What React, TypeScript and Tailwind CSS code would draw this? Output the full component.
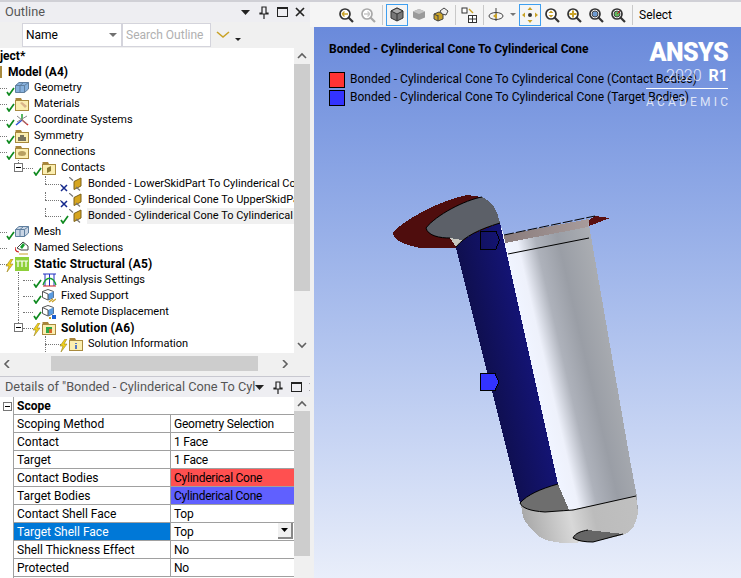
import type { ReactNode } from 'react';

type Status = 'check' | 'cross' | 'bolt';

const iconLeft: Record<number, string> = { 1: 'pl-[15px]', 2: 'pl-[42px]', 3: 'pl-[69px]' };
const dotLeft: Record<number, string> = { 1: 'left-0 w-[7px]', 2: 'left-[23px] w-[10px]', 3: 'left-[45px] w-[16px]' };

function Mark({ status }: { status: Status }) {
  if (status === 'check') {
    return (
      <svg width="9" height="9" viewBox="0 0 9 9" className="absolute left-[-9px] top-[6px]">
        <path d="M1 5 L3 8 L8 1" fill="none" stroke="#0f8a1f" strokeWidth="1.7" />
      </svg>
    );
  }
  if (status === 'cross') {
    return (
      <svg width="8" height="8" viewBox="0 0 8 8" className="absolute left-[-9px] top-[7px]">
        <path d="M1 1 L7 7 M7 1 L1 7" fill="none" stroke="#14288c" strokeWidth="1.5" />
      </svg>
    );
  }
  return (
    <svg width="9" height="13" viewBox="0 0 9 13" className="absolute left-[-10px] top-[2px]">
      <path d="M6 0 L1 7 L4 7 L2 13 L8 5 L5 5 L8 0 Z" fill="#f2d21c" stroke="#9a8420" strokeWidth="0.6" />
    </svg>
  );
}

function Folder({ children }: { children?: ReactNode }) {
  return (
    <svg width="14" height="14" viewBox="0 0 14 14">
      <path d="M0.5 3 V1 H6 L7 3 H13.5 V4 H0.5 Z" fill="#a8853a" />
      <rect x="0.5" y="3.5" width="13" height="10" fill="#fbeeb0" stroke="#a88a3e" />
      {children}
    </svg>
  );
}

function Cube({ fill = '#5a9be0', extra }: { fill?: string; extra?: ReactNode }) {
  return (
    <svg width="14" height="14" viewBox="0 0 14 14">
      <path d="M6 0.5 L11.5 2.5 V8.5 L6 11 L0.5 8.5 V2.5 Z" fill="#fff" stroke="#555" />
      <path d="M6 5 L11.5 2.5 V8.5 L6 11 Z" fill={fill} />
      <path d="M0.5 2.5 L6 5 V11" fill="none" stroke="#555" />
      {extra}
    </svg>
  );
}

function Geo({ light }: { light?: boolean }) {
  return (
    <svg width="14" height="14" viewBox="0 0 14 14">
      <path d="M0.5 4.5 L4 1.5 H13.5 V8 L9.5 11.5 H0.5 Z" fill={light ? '#c9d5e4' : '#86b0dc'} stroke="#5f7f9f" />
      <path d="M0.5 4.5 H9.5 V11.5 M9.5 4.5 L13.5 1.5 M5 4.5 V11.5 M5 4.5 L8.5 1.5" fill="none" stroke="#5f7f9f" />
    </svg>
  );
}

function Contact() {
  return (
    <svg width="14" height="14" viewBox="0 0 14 14">
      <path d="M5 4.5 L12 1 V9 L5 12.5 Z" fill="#d6a51f" stroke="#7c611a" />
      <path d="M0 0 L4 3.5 M7 10 L11 13.5" stroke="#777" strokeWidth="1.2" />
    </svg>
  );
}

function TreeRow({
  depth,
  status,
  icon,
  bold,
  minus,
  selected,
  vLine,
  children,
}: {
  depth: 1 | 2 | 3;
  status?: Status;
  icon: ReactNode;
  bold?: boolean;
  minus?: boolean;
  selected?: boolean;
  vLine?: string;
  children: ReactNode;
}) {
  return (
    <div className={`relative flex h-4 items-center whitespace-nowrap ${iconLeft[depth]}`}>
      <span className={`absolute top-[8px] border-t border-dotted border-[#777] ${dotLeft[depth]}`} />
      {vLine && <span className={`absolute border-l border-dotted border-[#777] ${vLine}`} />}
      {minus && <MinusBox className="absolute left-[14px] top-[3px]" />}
      <span className="relative mr-[5px] h-[14px] w-[14px] shrink-0">
        {icon}
        {status && <Mark status={status} />}
      </span>
      <span className={`${bold ? 'text-[12px] font-bold tracking-[0.2px]' : 'text-[11px]'} ${selected ? 'bg-[#f0f0f0] pr-[40px] -ml-[1px] pl-[1px]' : ''}`}>{children}</span>
    </div>
  );
}

function MinusBox({ className }: { className?: string }) {
  return (
    <span className={`flex h-[9px] w-[9px] items-center justify-center border border-[#777] bg-white ${className ?? ''}`}>
      <span className="h-px w-[5px] bg-black" />
    </span>
  );
}

function Chevron({ dir }: { dir: 'up' | 'down' | 'left' | 'right' }) {
  const d = {
    up: 'M1 6 L5 2 L9 6',
    down: 'M1 2 L5 6 L9 2',
    left: 'M6 0 L2 4 L6 8',
    right: 'M3 0 L7 4 L3 8',
  }[dir];
  return (
    <svg width="10" height="8" viewBox="0 0 10 8">
      <path d={d} fill="none" stroke="#606060" strokeWidth="1.6" />
    </svg>
  );
}

function TitleBar({ title, fill }: { title: string; fill?: boolean }) {
  return (
    <div className="flex h-5 shrink-0 items-center bg-[#eeeef2] pl-[5px] pr-[5px] text-[12.75px] text-[#555]">
      <span className="whitespace-nowrap">{title}</span>
      {fill && <span className="mx-[5px] h-[7px] flex-1 bg-[radial-gradient(#a8a8a8_35%,transparent_40%)] bg-[length:2px_2px]" />}
      <svg width="9" height="5" viewBox="0 0 9 5" className="ml-auto shrink-0">
        <path d="M0 0 H9 L4.5 5 Z" fill="#222" />
      </svg>
      <svg width="10" height="13" viewBox="0 0 10 13" className="ml-[9px] shrink-0">
        <path d="M3 1 H7 V7 H9 V8 H1 V7 H3 Z M5 8 V13" fill="none" stroke="#222" strokeWidth="1.2" />
      </svg>
      <span className="ml-[8px] h-[10px] w-[11px] shrink-0 border border-t-2 border-[#222]" />
      <svg width="10" height="10" viewBox="0 0 10 10" className="ml-[7px] shrink-0">
        <path d="M1 1 L9 9 M9 1 L1 9" stroke="#222" strokeWidth="1.7" />
      </svg>
    </div>
  );
}

function Grip() {
  return <span className="h-[18px] w-[5px] shrink-0 bg-[radial-gradient(#aaa_40%,transparent_45%)] bg-[length:2px_2px]" />;
}

function Mag({ dot, dim }: { dot: ReactNode; dim?: boolean }) {
  const c = dim ? '#a8a8a8' : '#333';
  return (
    <svg width="16" height="16" viewBox="0 0 16 16">
      <circle cx="7" cy="7" r="5" fill="#fff" stroke={c} strokeWidth="1.7" />
      <path d="M10.5 10.5 L15 15" stroke={c} strokeWidth="2.2" />
      {dot}
    </svg>
  );
}

function ToolBtn({ active, children, className }: { active?: boolean; children: ReactNode; className?: string }) {
  return (
    <span className={`flex h-[22px] w-[22px] shrink-0 items-center justify-center ${active ? 'border border-[#3f9ff0]' : ''} ${className ?? ''}`}>
      {children}
    </span>
  );
}

function Sep() {
  return <span className="mx-[3px] h-[20px] w-px shrink-0 bg-[#c9c9c9]" />;
}

const props: { label: string; value: string; cell?: string; rowSel?: boolean; drop?: boolean }[] = [
  { label: 'Scoping Method', value: 'Geometry Selection' },
  { label: 'Contact', value: '1 Face' },
  { label: 'Target', value: '1 Face' },
  { label: 'Contact Bodies', value: 'Cylinderical Cone', cell: 'bg-[#ff5050]' },
  { label: 'Target Bodies', value: 'Cylinderical Cone', cell: 'bg-[#6060ff]' },
  { label: 'Contact Shell Face', value: 'Top' },
  { label: 'Target Shell Face', value: 'Top', rowSel: true, drop: true },
  { label: 'Shell Thickness Effect', value: 'No' },
  { label: 'Protected', value: 'No' },
];

function Model() {
  return (
    <svg className="absolute inset-0" width="427" height="551" viewBox="314 27 427 551" shapeRendering="crispEdges">
      <defs>
        <linearGradient id="body" gradientUnits="userSpaceOnUse" x1="530" y1="350" x2="612" y2="331">
          <stop offset="0" stopColor="#f0f4ff" />
          <stop offset="0.14" stopColor="#eef1fb" />
          <stop offset="0.36" stopColor="#aeb2bb" />
          <stop offset="0.62" stopColor="#9a9ea6" />
          <stop offset="1" stopColor="#aaadb2" />
        </linearGradient>
        <linearGradient id="tube" gradientUnits="userSpaceOnUse" x1="470" y1="350" x2="535" y2="335">
          <stop offset="0" stopColor="#0e0e48" />
          <stop offset="1" stopColor="#15157c" />
        </linearGradient>
        <linearGradient id="dome" gradientUnits="userSpaceOnUse" x1="525" y1="530" x2="640" y2="505">
          <stop offset="0" stopColor="#a8a8a8" />
          <stop offset="0.4" stopColor="#d8d8d8" />
          <stop offset="0.6" stopColor="#bcbcbc" />
          <stop offset="1" stopColor="#c0c0c0" />
        </linearGradient>
        <linearGradient id="band" gradientUnits="userSpaceOnUse" x1="504" y1="0" x2="590" y2="0">
          <stop offset="0" stopColor="#8a7c7c" />
          <stop offset="1" stopColor="#a89c9c" />
        </linearGradient>
      </defs>
      {/* flange */}
      <path d="M393 233 C400 222 440 200 467 195 L482 197 L500 223 L456 248 C440 248 425 249 420 248 C405 245 393 240 393 233 Z" fill="#4f0d0d" />
      <path d="M589 220 L595 216 L610 218 L589 226 Z" fill="#5a0f0f" />
      {/* body */}
      <path d="M500 223 L504 235 L589 219 L589 225 L630 460 L637 497 L638 513 C636 525 632 532 623 535 L593 542 L563 543 C552 542 545 540 540 537 C532 530 525 523 523 517 L521 505 L558 484 Z" fill="url(#body)" />
      <path d="M504 235 L589 219 L588 227 L505 243 Z" fill="url(#band)" />
      <path d="M521 505 L570 510 L636 496 L638 513 C636 525 632 532 623 535 L593 542 L563 543 C552 542 545 540 540 537 C532 530 525 523 523 517 Z" fill="url(#dome)" />
      {/* tube */}
      <path d="M456 248 C462 240 470 235 480 231 L500 223 L558 484 C540 489 527 495 520 503 Z" fill="url(#tube)" />
      <path d="M558 484 C540 489 527 495 520 503 C522 508 530 511 545 512 L569 510 Z" fill="#6e6e6e" />
      {/* opening */}
      <path d="M426 228 C436 215 465 200 482 197 C492 200 498 212 500 223 C480 229 465 236 456 247 L450 238 C440 238 428 236 426 228 Z" fill="#5c6068" />
      <path d="M450 238 L456 247 L462 240 Z" fill="#c8c8c0" />
      <path d="M573 538 C575 533 582 531 588 530 L623 534 L593 542 C585 542 575 541 573 538 Z" fill="#666" />
      <g fill="none" stroke="#000" strokeWidth="1" shapeRendering="auto">
        <path d="M482 197 C465 200 436 215 426 228 C428 236 440 238 450 238" />
        <path d="M456 247 C465 236 480 229 500 223" />
        <path d="M504 235 L595 216" strokeDasharray="10 2" />
        <path d="M508 254 L589 238" />
        <path d="M520 503 C527 495 540 489 558 484" />
        <path d="M520 503 C522 508 530 511 545 512 L573 510 L636 496" />
        <path d="M573 538 C575 533 582 531 588 530 M573 538 C578 541 585 542 593 542 L623 534" />
      </g>
      {/* markers */}
      <path d="M480.5 231.5 H496 L499.5 240 L496 249 H480.5 Z" fill="none" stroke="#000" strokeWidth="1" />
      <path d="M480.5 373.5 H495 L499 382 L495 390.5 H480.5 Z" fill="#3333ff" stroke="#000" strokeWidth="1" />
    </svg>
  );
}

export default function App() {
  return (
    <div className="flex h-[578px] w-[741px] overflow-hidden bg-[#f0f0f0] text-[12px] text-black font-['Roboto','Noto_Sans',sans-serif]">
      {/* Left column */}
      <div className="flex w-[310px] shrink-0 flex-col overflow-hidden border-t-2 border-[#d0d0d6]">
        <TitleBar title="Outline" fill />

        <div className="flex h-[26px] shrink-0 items-center bg-[#f0f0f0] pl-[10px]">
          <Grip />
          <span className="ml-[7px] flex h-[24px] w-[100px] items-center justify-between border border-[#d4d4dc] bg-white pl-[3px] pr-[4px]">
            Name
            <svg width="8" height="4" viewBox="0 0 8 4"><path d="M0 0 H8 L4 4 Z" fill="#707070" /></svg>
          </span>
          <span className="flex h-[24px] w-[89px] items-center border border-[#d4d4dc] bg-white pl-[3px] text-[#b0b0b0]">Search Outline</span>
          <svg width="14" height="8" viewBox="0 0 14 8" className="ml-[5px]">
            <path d="M1 1 L7 6 L13 1" fill="none" stroke="#c9a227" strokeWidth="1.6" />
          </svg>
          <svg width="6" height="3" viewBox="0 0 6 3" className="ml-[5px] mt-[8px]"><path d="M0 0 H6 L3 3 Z" fill="#222" /></svg>
        </div>

        <div className="flex h-[305px] shrink-0">
          <div className="w-[294px] shrink-0 overflow-hidden bg-white">
            <div className="flex h-4 items-center font-bold">ject*</div>
            <div className="flex h-4 items-center font-bold">
              <span className="mr-[6px] h-[12px] w-[2px] bg-[#a88a3e]" />
              Model (A4)
            </div>
            <TreeRow depth={1} status="check" icon={<Geo />}>Geometry</TreeRow>
            <TreeRow depth={1} status="check" icon={<Folder><path d="M5 6 L10 11 L12 9 L7 5 Z" fill="#d9b48a" /></Folder>}>Materials</TreeRow>
            <TreeRow depth={1} status="check" icon={
              <svg width="14" height="14" viewBox="0 0 14 14">
                <path d="M7 7 V1" stroke="#1fa02f" strokeWidth="1.5" />
                <path d="M7 7 L1 12" stroke="#2a50d8" strokeWidth="1.5" />
                <path d="M7 7 L13 12" stroke="#d82a2a" strokeWidth="1.5" />
                <path d="M2 3 L12 11 M2 9 L12 3" stroke="#888" />
              </svg>
            }>Coordinate Systems</TreeRow>
            <TreeRow depth={1} status="check" icon={<Folder><path d="M4 12 V8 M6 12 V6 M8 12 V6 M10 12 V8" stroke="#333" strokeWidth="1.3" /></Folder>}>Symmetry</TreeRow>
            <TreeRow depth={1} status="check" icon={<Folder><ellipse cx="7" cy="8.5" rx="4" ry="2.5" fill="#b8a060" /></Folder>}>Connections</TreeRow>
            <TreeRow depth={2} status="check" minus vLine="left-[18px] top-0 h-[3px]" icon={<Folder><path d="M5 7 L9 5 V10 L5 12 Z" fill="#8a7a30" /></Folder>}>Contacts</TreeRow>
            <TreeRow depth={3} status="cross" vLine="left-[45px] top-0 h-[8px]" icon={<Contact />}>Bonded - LowerSkidPart To Cylinderical Cone</TreeRow>
            <TreeRow depth={3} status="cross" vLine="left-[45px] top-0 h-[8px]" icon={<Contact />}>Bonded - Cylinderical Cone To UpperSkidPart</TreeRow>
            <TreeRow depth={3} status="check" selected vLine="left-[45px] top-0 h-[8px]" icon={<Contact />}>Bonded - Cylinderical Cone To Cylinderical Cone</TreeRow>
            <TreeRow depth={1} status="check" icon={<Geo light />}>Mesh</TreeRow>
            <TreeRow depth={1} icon={
              <svg width="14" height="14" viewBox="0 0 14 14">
                <path d="M2 7 L8 1 L13 5 V9 H6 Z" fill="#fff" stroke="#444" />
                <path d="M5 6 L8 2 L10 4 L7 8 Z" fill="#18a030" />
                <path d="M0 6 C0 10 2 11 4 11" fill="none" stroke="#d02020" strokeWidth="1.2" />
                <path d="M4 13 H13" stroke="#c9a227" />
              </svg>
            }>Named Selections</TreeRow>
            <TreeRow depth={1} bold status="bolt" icon={
              <span className="flex h-[14px] w-[14px] items-center justify-center bg-[#8ed03a]">
                <svg width="12" height="8" viewBox="0 0 12 8"><path d="M0 1 H12 M2 1 V7 M6 1 V7 M10 1 V7" stroke="#fff" strokeWidth="1.2" /></svg>
              </span>
            }>Static Structural (A5)</TreeRow>
            <TreeRow depth={2} status="check" vLine="left-[18px] top-0 h-4" icon={
              <svg width="15" height="14" viewBox="0 0 15 14">
                <path d="M1 1 H14 M3 1 V13 M7.5 1 V13 M12 1 V13" stroke="#2030c0" />
                <path d="M1 13 H14" stroke="#d02020" />
                <path d="M1 12 C4 3 11 3 14 12" fill="none" stroke="#18a030" strokeWidth="1.3" />
              </svg>
            }>Analysis Settings</TreeRow>
            <TreeRow depth={2} status="check" vLine="left-[18px] top-0 h-4" icon={<Cube extra={<path d="M7 13 L11 10 M10 13 L14 10" stroke="#c9a227" strokeWidth="1.3" />} />}>Fixed Support</TreeRow>
            <TreeRow depth={2} status="check" vLine="left-[18px] top-0 h-4" icon={<Cube extra={<><rect x="10" y="10" width="4" height="4" fill="#1a5fd0" /><rect x="7" y="12" width="2" height="2" fill="#c9a227" /></>} />}>Remote Displacement</TreeRow>
            <TreeRow depth={2} bold status="bolt" minus vLine="left-[18px] top-0 h-[3px]" icon={<Folder><rect x="4" y="6" width="6" height="6" fill="#2fa848" /><rect x="7" y="8" width="3" height="4" fill="#d8682a" /></Folder>}>Solution (A6)</TreeRow>
            <TreeRow depth={3} status="bolt" vLine="left-[45px] top-0 h-4" icon={<Folder><path d="M7 6 V7 M7 8 V12" stroke="#2050c8" strokeWidth="1.5" /></Folder>}>Solution Information</TreeRow>
          </div>
          <div className="flex w-4 shrink-0 flex-col bg-[#f0f0f0]">
            <div className="flex h-4 shrink-0 items-center justify-center"><Chevron dir="up" /></div>
            <div className="h-[227px] shrink-0 bg-[#cdcdcd]" />
            <div className="flex-1" />
            <div className="flex h-4 shrink-0 items-center justify-center"><Chevron dir="down" /></div>
          </div>
        </div>

        <div className="flex h-[21px] shrink-0 items-center bg-[#f0f0f0]">
          <div className="flex w-[51px] shrink-0 justify-center pr-[36px]"><Chevron dir="left" /></div>
          <div className="h-[15px] w-[207px] shrink-0 bg-[#cdcdcd]" />
          <div className="ml-[22px]"><Chevron dir="right" /></div>
        </div>

        <div className="mt-[2px] border-t border-[#c8c8d0]">
          <TitleBar title={'Details of "Bonded - Cylinderical Cone To Cyl'} />
        </div>

        <div className="flex min-h-0 flex-1">
          <div className="flex w-[294px] shrink-0 bg-white">
            <div className="w-[13px] shrink-0 pl-[3px] pt-[5px]"><MinusBox /></div>
            <div className="flex-1 border-l border-[#a0a0a0]">
              <div className="flex h-[18px] items-center border-b border-[#a0a0a0] pl-[3px] font-bold">Scope</div>
              {props.map((p) => (
                <div key={p.label} className="flex h-[18px] border-b border-[#a0a0a0]">
                  <div className={`flex w-[157px] shrink-0 items-center border-r border-[#a0a0a0] pl-[3px] ${p.rowSel ? 'bg-[#0078d7] text-white' : ''}`}>{p.label}</div>
                  <div className={`relative flex flex-1 items-center pl-[3px] tracking-[-0.25px] ${p.cell ?? ''}`}>
                    {p.value}
                    {p.drop && (
                      <span className="absolute right-[1px] top-[0px] flex h-[16px] w-[15px] items-center justify-center border-r-2 border-b-2 border-[#888] bg-[#f0f0f0]">
                        <svg width="7" height="4" viewBox="0 0 7 4"><path d="M0 0 H7 L3.5 4 Z" fill="#000" /></svg>
                      </span>
                    )}
                  </div>
                </div>
              ))}
            </div>
          </div>
          <div className="flex w-4 shrink-0 flex-col bg-[#f0f0f0]">
            <div className="flex h-[14px] shrink-0 items-center justify-center"><Chevron dir="up" /></div>
            <div className="h-[145px] shrink-0 bg-[#cdcdcd]" />
          </div>
        </div>
      </div>

      {/* Right column */}
      <div className="flex min-w-0 flex-1 flex-col border-t-2 border-[#d0d0d6]">
        <div className="flex h-[25px] shrink-0 items-center bg-[#f5f5f5] pl-[13px]">
          <Grip />
          <ToolBtn className="ml-[7px]"><Mag dot={<path d="M4 7 H10 M4 7 L6.5 4.5 M4 7 L6.5 9.5" stroke="#c9a227" strokeWidth="1.3" fill="none" />} /></ToolBtn>
          <ToolBtn><Mag dim dot={<path d="M4 7 H10 M10 7 L7.5 4.5 M10 7 L7.5 9.5" stroke="#c8c8c8" strokeWidth="1.3" fill="none" />} /></ToolBtn>
          <Sep />
          <ToolBtn active>
            <svg width="14" height="15" viewBox="0 0 14 15"><path d="M7 1 L13 4 V11 L7 14 L1 11 V4 Z" fill="#777" stroke="#333" /><path d="M1 4 L7 7 L13 4 L7 1 Z" fill="#aaa" stroke="#333" /><path d="M7 7 V14" stroke="#333" /></svg>
          </ToolBtn>
          <ToolBtn>
            <svg width="14" height="13" viewBox="0 0 14 13"><path d="M7 1 L13 3.5 V9.5 L7 12 L1 9.5 V3.5 Z" fill="#9a9a9a" /><path d="M1 3.5 L7 6 L13 3.5 L7 1 Z" fill="#c4c4c4" /></svg>
          </ToolBtn>
          <ToolBtn>
            <svg width="16" height="15" viewBox="0 0 16 15"><path d="M1 7 L6 5 L10 7 V12 L5 14 L1 12 Z" fill="#c9a227" stroke="#444" /><path d="M7 4 L11 1 L15 4 L13 8 L9 7 Z" fill="#eee" stroke="#444" /><path d="M5 8 V14 M1 7 L5 9" stroke="#444" /></svg>
          </ToolBtn>
          <Sep />
          <ToolBtn className="-ml-[1px]">
            <svg width="16" height="16" viewBox="0 0 16 16"><rect x="1" y="1" width="5" height="5" fill="#fff" stroke="#333" /><path d="M8 2 L12 6" stroke="#c9a227" strokeWidth="1.4" /><rect x="7.5" y="8.5" width="8" height="7" fill="#fff" stroke="#333" /><path d="M11.5 8.5 V15.5 M7.5 12 H15.5" stroke="#333" /></svg>
          </ToolBtn>
          <Sep />
          <ToolBtn className="-ml-[1px]">
            <svg width="18" height="16" viewBox="0 0 18 16"><ellipse cx="8" cy="9" rx="7" ry="3.5" fill="none" stroke="#444" /><path d="M8 1 V14" stroke="#444" /><path d="M5 9 L9 6 L9 12 Z" fill="#c9a227" /></svg>
          </ToolBtn>
          <svg width="6" height="3" viewBox="0 0 6 3" className="ml-[2px] shrink-0"><path d="M0 0 H6 L3 3 Z" fill="#777" /></svg>
          <ToolBtn active className="ml-[3px]">
            <svg width="16" height="16" viewBox="0 0 16 16"><path d="M8 0 L10.5 3 H5.5 Z M8 16 L5.5 13 H10.5 Z M0 8 L3 5.5 V10.5 Z M16 8 L13 10.5 V5.5 Z" fill="#c9a227" /><circle cx="8" cy="8" r="2" fill="#333" /></svg>
          </ToolBtn>
          <ToolBtn><Mag dot={<path d="M7 3.5 L4.5 6 H9.5 Z M7 10.5 L4.5 8 H9.5 Z" fill="#c9a227" />} /></ToolBtn>
          <ToolBtn><Mag dot={<path d="M3.5 7 H10.5 M7 3.5 V10.5" stroke="#c9a227" strokeWidth="2" />} /></ToolBtn>
          <ToolBtn><Mag dot={<circle cx="7" cy="7" r="3" fill="#6f9bd0" stroke="#444" />} /></ToolBtn>
          <ToolBtn><Mag dot={<><circle cx="7" cy="7" r="3" fill="#5fb85f" stroke="#444" /><path d="M7 7 L10 4" stroke="#d02020" /></>} /></ToolBtn>
          <Sep />
          <span className="ml-[3px]">Select</span>
        </div>

        <div className="relative ml-[4px] flex-1 overflow-hidden bg-linear-to-b from-[#6a8adb] to-[#e9eefa] pl-[15px] pt-[14px]">
          <Model />
          <div className="relative font-bold leading-4">Bonded - Cylinderical Cone To Cylinderical Cone</div>
          <div className="relative mt-[15px] flex flex-col gap-[2px]">
            <div className="flex h-4 items-center gap-[5px] whitespace-nowrap">
              <span className="h-4 w-4 shrink-0 border border-black bg-[#ff3333]" />
              <span className="mb-[2px]">Bonded - Cylinderical Cone To Cylinderical Cone (Contact Bodies)</span>
            </div>
            <div className="flex h-4 items-center gap-[5px] whitespace-nowrap">
              <span className="h-4 w-4 shrink-0 border border-black bg-[#3333ff]" />
              <span className="mb-[2px]">Bonded - Cylinderical Cone To Cylinderical Cone (Target Bodies)</span>
            </div>
          </div>

          {/* logo */}
          <div className="absolute right-[13px] top-[13px] flex w-[82px] flex-col items-end text-white">
            <div className="text-[25px] font-black leading-[26px] tracking-[-0.6px]">ANSYS</div>
            <div className="mt-[2px] flex items-baseline gap-[7px] text-[16px] leading-[16px]">
              <span className="font-light text-white/80">2020</span>
              <span className="font-bold">R1</span>
            </div>
            <div className="mt-[4px] h-px w-full bg-white" />
            <div className="mt-[7px] flex w-full justify-between text-[12px] leading-[13px] text-white/75">
              {'ACADEMIC'.split('').map((c, i) => (
                <span key={i}>{c}</span>
              ))}
            </div>
          </div>
        </div>
      </div>
    </div>
  );
}
